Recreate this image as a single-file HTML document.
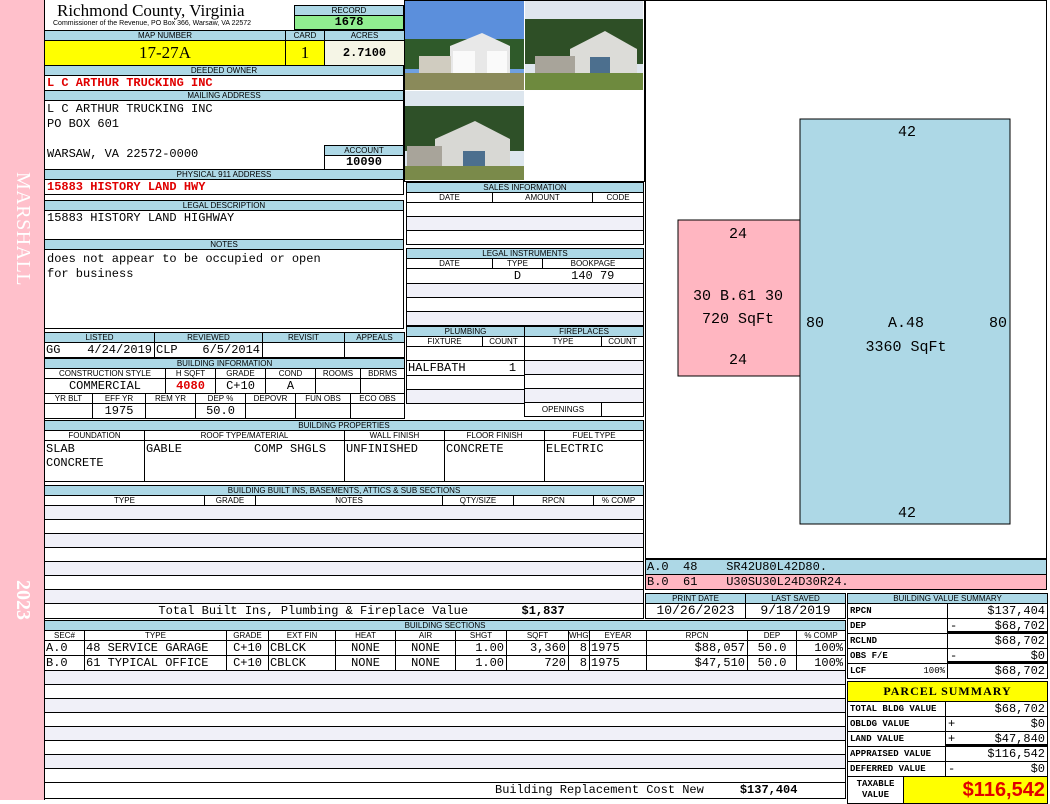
<!DOCTYPE html>
<html><head><meta charset="utf-8"><style>
*{box-sizing:border-box;margin:0;padding:0}
body{width:1050px;height:800px;position:relative;background:#fff;overflow:hidden;font-family:"Liberation Mono",monospace}
.a{position:absolute}
table.t{position:absolute;border-collapse:collapse;table-layout:fixed;background:#fff}
.t td{border:1px solid #000;padding:0 2px;overflow:hidden;white-space:pre;font:12px/14px "Liberation Mono",monospace;height:14px;color:#000}
.t tr.h td{background:#add8e6;font:8px/9px "Liberation Sans",sans-serif;text-align:center;height:9px;padding:0}
.t tr.s td{font:8px/9px "Liberation Sans",sans-serif;text-align:center;height:9px;padding:0}
.g td{background:#f0f0f8}
.r{text-align:right}.c{text-align:center}
.red{color:#e00000!important;font-weight:bold!important}
.lab td{font:bold 9px/14px "Liberation Mono",monospace}
.v{font:12px/14px 'Liberation Mono',monospace!important}
.tk{background:linear-gradient(#000,#000) left bottom/100% 2px no-repeat}
</style></head><body>
<div class="a" style="left:0;top:0;width:44px;height:800px;background:#ffc0cb"></div>
<div class="a" style="left:10px;top:172px;transform-origin:0 0;transform:translate(24px,0) rotate(90deg);color:#fff;font:20px 'Liberation Serif',serif;letter-spacing:0.5px;white-space:nowrap">MARSHALL</div>
<div class="a" style="left:10px;top:580px;transform-origin:0 0;transform:translate(24px,0) rotate(90deg);color:#fff;font:bold 20px 'Liberation Serif',serif;white-space:nowrap">2023</div>
<div class="a" style="left:44px;top:0;width:1px;height:800px;background:#000"></div>

<div class="a" style="left:57px;top:1px;font:17px/20px 'Liberation Serif',serif">Richmond County, Virginia</div>
<div class="a" style="left:53px;top:20px;font:7px/8px 'Liberation Sans',sans-serif">Commissioner of the Revenue, PO Box 366, Warsaw, VA 22572</div>

<table class="t" style="left:294px;top:5px;width:110px"><tr class="h"><td>RECORD</td></tr><tr><td class="c" style="background:#90ee90;font-weight:bold;height:13px;line-height:13px">1678</td></tr></table>

<table class="t" style="left:44px;top:30px;width:360px"><col style="width:241px"><col style="width:39px"><col style="width:80px">
<tr class="h"><td>MAP NUMBER</td><td>CARD</td><td>ACRES</td></tr>
<tr><td class="c" style="height:24px;background:#ff0;font:17px/24px 'Liberation Serif',serif">17-27A</td><td class="c" style="background:#ff0;font:17px/24px 'Liberation Serif',serif">1</td><td class="c" style="background:#f5f5e6;font-weight:bold">2.7100</td></tr></table>

<table class="t" style="left:44px;top:65px;width:360px">
<tr class="h"><td>DEEDED OWNER</td></tr>
<tr><td class="red">L C ARTHUR TRUCKING INC</td></tr>
<tr class="h"><td>MAILING ADDRESS</td></tr>
<tr><td style="height:69px;vertical-align:top;line-height:15px;padding-top:1px">L C ARTHUR TRUCKING INC
PO BOX 601

WARSAW, VA 22572-0000</td></tr>
<tr class="h"><td>PHYSICAL 911 ADDRESS</td></tr>
<tr><td class="red">15883 HISTORY LAND HWY</td></tr></table>
<table class="t" style="left:324px;top:145px;width:80px"><tr class="h"><td>ACCOUNT</td></tr><tr><td class="c" style="font-weight:bold;height:13px;line-height:13px">10090</td></tr></table>

<table class="t" style="left:44px;top:200px;width:360px">
<tr class="h"><td>LEGAL DESCRIPTION</td></tr>
<tr><td style="height:29px;vertical-align:top">15883 HISTORY LAND HIGHWAY</td></tr>
<tr class="h"><td>NOTES</td></tr>
<tr><td style="height:79px;vertical-align:top;line-height:15px;padding-top:2px">does not appear to be occupied or open
for business</td></tr></table>

<table class="t" style="left:44px;top:332px;width:360px"><col style="width:110px"><col style="width:108px"><col style="width:82px"><col style="width:60px">
<tr class="h"><td>LISTED</td><td>REVIEWED</td><td>REVISIT</td><td>APPEALS</td></tr>
<tr><td style="padding:0 2px 0 1px">GG<span style="float:right">4/24/2019</span></td><td style="padding:0 2px 0 1px">CLP<span style="float:right">6/5/2014</span></td><td></td><td></td></tr></table>

<table class="t" style="left:44px;top:358px;width:360px"><col style="width:121px"><col style="width:50px"><col style="width:50px"><col style="width:50px"><col style="width:45px"><col style="width:44px">
<tr class="h"><td colspan="6">BUILDING INFORMATION</td></tr>
<tr class="s"><td>CONSTRUCTION STYLE</td><td>H SQFT</td><td>GRADE</td><td>COND</td><td>ROOMS</td><td>BDRMS</td></tr>
<tr><td class="c">COMMERCIAL</td><td class="c red">4080</td><td class="c">C+10</td><td class="c">A</td><td></td><td></td></tr></table>
<table class="t" style="left:44px;top:393px;width:360px"><col style="width:48px"><col style="width:53px"><col style="width:50px"><col style="width:50px"><col style="width:50px"><col style="width:55px"><col style="width:54px">
<tr class="s"><td>YR BLT</td><td>EFF YR</td><td>REM YR</td><td>DEP %</td><td>DEPOVR</td><td>FUN OBS</td><td>ECO OBS</td></tr>
<tr><td></td><td class="c">1975</td><td></td><td class="c">50.0</td><td></td><td></td><td></td></tr></table>

<div class="a" style="left:404px;top:0;width:241px;height:182px;border:1px solid #000;background:#fff"></div>
<svg class="a" style="left:405px;top:1px" width="119" height="89" viewBox="0 0 119 89"><rect width="119" height="89" fill="#6fa0e0"/><rect y="0" width="119" height="40" fill="#5b8fdc"/><rect y="38" width="119" height="30" fill="#2f5a2a"/><polygon points="45,45 77,32 105,45 105,72 45,72" fill="#e8e8e8"/><rect x="14" y="55" width="32" height="17" fill="#d0ccc0"/><rect x="48" y="50" width="22" height="22" fill="#fafafa"/><rect x="82" y="50" width="20" height="22" fill="#fafafa"/><rect y="72" width="119" height="17" fill="#8a8a5a"/></svg>
<svg class="a" style="left:525px;top:1px" width="118" height="89" viewBox="0 0 118 89"><rect width="118" height="89" fill="#dfe6ee"/><rect y="18" width="118" height="45" fill="#2e4f26"/><polygon points="45,48 80,30 112,48 112,72 45,72" fill="#dcdcd8"/><rect x="10" y="55" width="40" height="17" fill="#a8a49a"/><rect x="65" y="56" width="20" height="16" fill="#4c6f8e"/><rect y="72" width="118" height="17" fill="#6e8a3e"/></svg>
<svg class="a" style="left:405px;top:91px" width="119" height="89" viewBox="0 0 119 89"><rect width="119" height="89" fill="#dde6ee"/><rect y="15" width="119" height="45" fill="#2e5028"/><polygon points="30,48 70,30 105,48 105,75 30,75" fill="#d8d8d4"/><rect x="2" y="55" width="35" height="20" fill="#a8a49a"/><rect x="58" y="60" width="22" height="15" fill="#4c6f8e"/><rect y="75" width="119" height="14" fill="#7a8a4a"/></svg>

<table class="t" style="left:406px;top:182px;width:237px"><col style="width:86px"><col style="width:100px"><col style="width:51px">
<tr class="h"><td colspan="3">SALES INFORMATION</td></tr>
<tr class="s"><td>DATE</td><td>AMOUNT</td><td>CODE</td></tr>
<tr><td colspan="3"></td></tr><tr class="g"><td colspan="3"></td></tr><tr><td colspan="3"></td></tr></table>

<table class="t" style="left:406px;top:248px;width:237px"><col style="width:86px"><col style="width:50px"><col style="width:101px">
<tr class="h"><td colspan="3">LEGAL INSTRUMENTS</td></tr>
<tr class="s"><td>DATE</td><td>TYPE</td><td>BOOKPAGE</td></tr>
<tr><td style="border-right:0"></td><td class="c" style="border:0;border-top:1px solid #000">D</td><td class="c" style="border-left:0">140 79</td></tr><tr class="g"><td colspan="3"></td></tr><tr><td colspan="3"></td></tr><tr class="g"><td colspan="3"></td></tr></table>

<table class="t" style="left:406px;top:326px;width:118px"><col style="width:76px"><col style="width:42px">
<tr class="h"><td colspan="2">PLUMBING</td></tr>
<tr class="s"><td>FIXTURE</td><td>COUNT</td></tr>
<tr><td colspan="2"></td></tr><tr><td colspan="2" style="padding:0 8px 0 1px">HALFBATH<span style="float:right">1</span></td></tr><tr><td colspan="2"></td></tr><tr class="g"><td colspan="2"></td></tr></table>
<table class="t" style="left:524px;top:326px;width:119px"><col style="width:77px"><col style="width:42px">
<tr class="h"><td colspan="2">FIREPLACES</td></tr>
<tr class="s"><td>TYPE</td><td>COUNT</td></tr>
<tr><td colspan="2"></td></tr><tr class="g"><td colspan="2"></td></tr><tr><td colspan="2"></td></tr><tr class="g"><td colspan="2"></td></tr>
<tr class="s"><td style="height:13px;line-height:13px">OPENINGS</td><td></td></tr></table>

<table class="t" style="left:44px;top:420px;width:599px"><col style="width:100px"><col style="width:200px"><col style="width:100px"><col style="width:100px"><col style="width:99px">
<tr class="h"><td colspan="5">BUILDING PROPERTIES</td></tr>
<tr class="s"><td>FOUNDATION</td><td>ROOF TYPE/MATERIAL</td><td>WALL FINISH</td><td>FLOOR FINISH</td><td>FUEL TYPE</td></tr>
<tr><td style="height:41px;vertical-align:top;line-height:14px;padding:1px 1px">SLAB
CONCRETE</td><td style="vertical-align:top;line-height:14px;padding:1px 1px">GABLE          COMP SHGLS</td><td style="vertical-align:top;line-height:14px;padding:1px 1px">UNFINISHED</td><td style="vertical-align:top;line-height:14px;padding:1px 1px">CONCRETE</td><td style="vertical-align:top;line-height:14px;padding:1px 1px">ELECTRIC</td></tr></table>

<table class="t" style="left:44px;top:485px;width:599px"><col style="width:160px"><col style="width:51px"><col style="width:187px"><col style="width:71px"><col style="width:80px"><col style="width:50px">
<tr class="h"><td colspan="6">BUILDING BUILT INS, BASEMENTS, ATTICS &amp; SUB SECTIONS</td></tr>
<tr class="s"><td>TYPE</td><td>GRADE</td><td>NOTES</td><td>QTY/SIZE</td><td>RPCN</td><td>% COMP</td></tr>
<tr class="g"><td colspan="6"></td></tr><tr><td colspan="6"></td></tr><tr class="g"><td colspan="6"></td></tr><tr><td colspan="6"></td></tr><tr class="g"><td colspan="6"></td></tr><tr><td colspan="6"></td></tr><tr class="g"><td colspan="6"></td></tr>
<tr><td colspan="4" class="c" style="padding-left:70px;border-right:0">Total Built Ins, Plumbing &amp; Fireplace Value</td><td colspan="2" style="font-weight:bold;padding-left:8px;border-left:0">$1,837</td></tr></table>

<table class="t" style="left:44px;top:620px;width:801px"><col style="width:40px"><col style="width:142px"><col style="width:42px"><col style="width:67px"><col style="width:60px"><col style="width:60px"><col style="width:51px"><col style="width:62px"><col style="width:21px"><col style="width:57px"><col style="width:101px"><col style="width:49px"><col style="width:49px">
<tr class="h"><td colspan="13">BUILDING SECTIONS</td></tr>
<tr class="s"><td>SEC#</td><td>TYPE</td><td>GRADE</td><td>EXT FIN</td><td>HEAT</td><td>AIR</td><td>SHGT</td><td>SQFT</td><td>WHGT</td><td>EYEAR</td><td>RPCN</td><td>DEP</td><td>% COMP</td></tr>
<tr><td style="padding:0 1px">A.0</td><td style="padding:0 1px">48 SERVICE GARAGE</td><td class="c">C+10</td><td style="padding:0 1px">CBLCK</td><td class="c">NONE</td><td class="c">NONE</td><td class="r">1.00</td><td class="r">3,360</td><td class="r">8</td><td style="padding:0 1px">1975</td><td class="r">$88,057</td><td class="c">50.0</td><td class="r">100%</td></tr>
<tr><td style="padding:0 1px">B.0</td><td style="padding:0 1px">61 TYPICAL OFFICE</td><td class="c">C+10</td><td style="padding:0 1px">CBLCK</td><td class="c">NONE</td><td class="c">NONE</td><td class="r">1.00</td><td class="r">720</td><td class="r">8</td><td style="padding:0 1px">1975</td><td class="r">$47,510</td><td class="c">50.0</td><td class="r">100%</td></tr>
<tr class="g"><td colspan="13"></td></tr><tr><td colspan="13"></td></tr><tr class="g"><td colspan="13"></td></tr><tr><td colspan="13"></td></tr><tr class="g"><td colspan="13"></td></tr><tr><td colspan="13"></td></tr><tr class="g"><td colspan="13"></td></tr><tr><td colspan="13"></td></tr>
<tr><td colspan="13" style="height:15px;line-height:15px;padding-left:450px">Building Replacement Cost New     <b>$137,404</b></td></tr></table>

<div class="a" style="left:645px;top:0;width:402px;height:559px;border:1px solid #000;background:#fff"></div>
<svg class="a" style="left:645px;top:0" width="402" height="559" viewBox="0 0 402 559" font-family="Liberation Mono, monospace" font-size="15" text-anchor="middle">
<rect x="33" y="220" width="122" height="156" fill="#ffb6c1" stroke="#000" stroke-width="1"/>
<rect x="155" y="119" width="210" height="405" fill="#add8e6" stroke="#000" stroke-width="1"/>
<text x="262" y="136">42</text><text x="262" y="517">42</text>
<text x="170" y="327">80</text><text x="353" y="327">80</text>
<text x="261" y="327">A.48</text><text x="261" y="351">3360 SqFt</text>
<text x="93" y="238">24</text><text x="93" y="364">24</text>
<text x="93" y="300">30 B.61 30</text><text x="93" y="323">720 SqFt</text>
</svg>
<table class="t" style="left:645px;top:559px;width:402px">
<tr><td style="background:#add8e6;padding:0 1px">A.0  48    SR42U80L42D80.</td></tr>
<tr><td style="background:#ffb6c1;padding:0 1px">B.0  61    U30SU30L24D30R24.</td></tr></table>

<table class="t" style="left:645px;top:593px;width:200px"><col style="width:100px"><col style="width:100px">
<tr class="h"><td>PRINT DATE</td><td>LAST SAVED</td></tr>
<tr><td class="c" style="font-size:13px">10/26/2023</td><td class="c" style="font-size:13px">9/18/2019</td></tr></table>

<table class="t lab" style="left:847px;top:593px;width:200px"><col style="width:100px"><col style="width:100px">
<tr class="h"><td colspan="2">BUILDING VALUE SUMMARY</td></tr>
<tr><td>RPCN</td><td class="r v">$137,404</td></tr>
<tr><td>DEP</td><td class="r v tk"><span style="float:left">-</span>$68,702</td></tr>
<tr><td>RCLND</td><td class="r v">$68,702</td></tr>
<tr><td>OBS F/E</td><td class="r v tk"><span style="float:left">-</span>$0</td></tr>
<tr><td>LCF <span style="float:right;font-weight:normal">100%</span></td><td class="r v">$68,702</td></tr></table>

<table class="t lab" style="left:847px;top:681px;width:200px"><col style="width:56px"><col style="width:42px"><col style="width:102px">
<tr><td colspan="3" class="c" style="background:#ff0;height:19px;font:bold 12px/19px 'Liberation Serif',serif;letter-spacing:1px">PARCEL SUMMARY</td></tr>
<tr><td colspan="2">TOTAL BLDG VALUE</td><td class="r v">$68,702</td></tr>
<tr><td colspan="2">OBLDG VALUE</td><td class="r v"><span style="float:left">+</span>$0</td></tr>
<tr><td colspan="2">LAND VALUE</td><td class="r v tk"><span style="float:left">+</span>$47,840</td></tr>
<tr><td colspan="2">APPRAISED VALUE</td><td class="r v">$116,542</td></tr>
<tr><td colspan="2">DEFERRED VALUE</td><td class="r v"><span style="float:left">-</span>$0</td></tr>
<tr><td class="c" style="height:26px;line-height:11px;white-space:pre">TAXABLE
VALUE</td><td colspan="2" class="r" style="background:#ff0;color:#e00000;font:bold 20px/26px 'Liberation Sans',sans-serif">$116,542</td></tr></table>
</body></html>
